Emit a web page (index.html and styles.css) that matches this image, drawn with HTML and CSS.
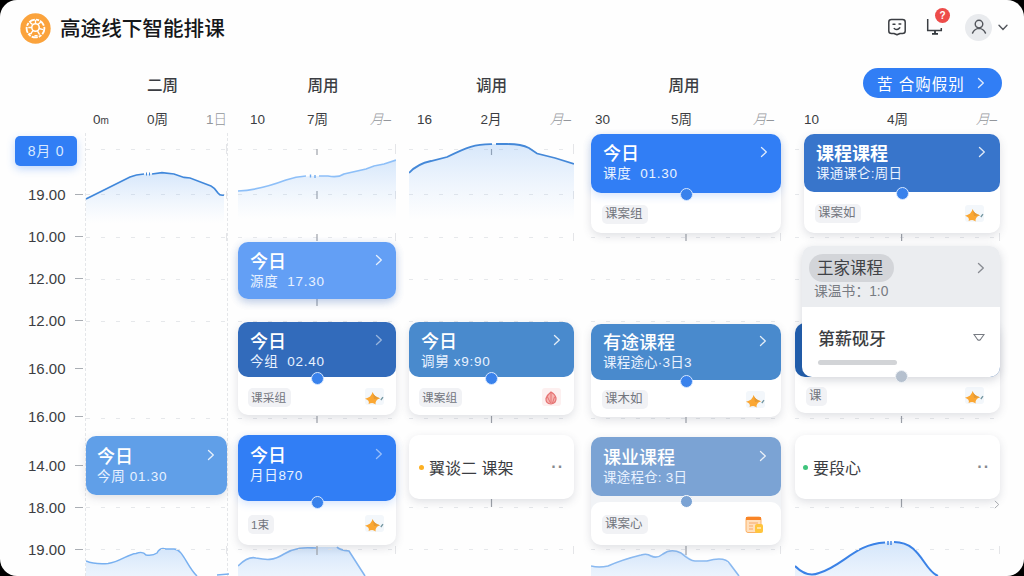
FILE: index.html
```html
<!DOCTYPE html>
<html lang="zh-CN">
<head>
    <meta charset="UTF-8">
    <meta name="viewport" content="width=device-width, initial-scale=1.0">
    <title>高途线下智能排课</title>
    <link rel="stylesheet" href="styles.css">
</head>
<body>
    <svg class="symbols" width="0" height="0">
        <symbol id="chevron" viewBox="0 0 8 12">
            <path d="M1.5 1.5 6.3 6 1.5 10.5" fill="none" stroke="currentColor" stroke-width="1.3" stroke-linecap="round" stroke-linejoin="round"/>
        </symbol>
        <symbol id="star" viewBox="0 0 20 18">
            <rect x="1" width="19" height="17" rx="3" fill="#f3f7fb"/>
            <path d="M8.6 4Q9.6 8.6 16 10.2 10.8 11.8 11.6 16.6 9 13.8 4.6 16 6 12.4 1 10.8 7.4 9.4 8.6 4Z" fill="#fba733"/>
            <path d="M8.6 4Q9.6 8.6 16 10.2L10 11Z" fill="#e59a35"/>
            <path d="M16.8 12 19 9.2" stroke="#7295a0" stroke-width="1.3"/>
        </symbol>
        <!-- horizontal rows behind every day column -->
        <symbol id="grid">
            <g stroke="#e6e8eb" stroke-width="1" stroke-dasharray="4 11">
                <line x1="0" x2="100%" y1="16.5" y2="16.5"/>
                <line x1="0" x2="100%" y1="61.5" y2="61.5"/>
                <line x1="0" x2="100%" y1="104.5" y2="104.5"/>
                <line x1="0" x2="100%" y1="146.5" y2="146.5"/>
                <line x1="0" x2="100%" y1="188.5" y2="188.5"/>
                <line x1="0" x2="100%" y1="285.5" y2="285.5"/>
                <line x1="0" x2="100%" y1="374.5" y2="374.5"/>
                <line x1="0" x2="100%" y1="416.5" y2="416.5"/>
            </g>
            <g stroke="#d9dbdf" stroke-width="1.4">
                <line x1="100%" x2="100%" y1="11" y2="21"/>
                <line x1="100%" x2="100%" y1="58" y2="66"/>
                <line x1="100%" x2="100%" y1="100" y2="108"/>
                <line x1="100%" x2="100%" y1="413" y2="421"/>
            </g>
        </symbol>
        <!-- centre ticks -->
        <symbol id="ticks">
            <g stroke="#9da1a8" stroke-width="1.2">
                <line x1="50%" x2="50%" y1="16" y2="22"/>
                <line x1="50%" x2="50%" y1="283" y2="290"/>
                <line x1="50%" x2="50%" y1="366" y2="374"/>
            </g>
        </symbol>
        <symbol id="ticks-more">
            <g stroke="#9da1a8" stroke-width="1.2">
                <line x1="50%" x2="50%" y1="58" y2="66"/>
                <line x1="50%" x2="50%" y1="101" y2="108"/>
                <line x1="50%" x2="50%" y1="413" y2="422"/>
            </g>
        </symbol>
        <linearGradient id="area" x1="0" y1="0" x2="0" y2="1">
            <stop offset="0" stop-color="#5b9ff0" stop-opacity=".24"/>
            <stop offset="1" stop-color="#8dbdf8" stop-opacity="0"/>
        </linearGradient>
        <linearGradient id="area-low" x1="0" y1="0" x2="0" y2="1">
            <stop offset="0" stop-color="#5b9ff0" stop-opacity=".26"/>
            <stop offset="1" stop-color="#8dbdf8" stop-opacity=".16"/>
        </linearGradient>
    </svg>

    <div class="app">
        <header class="header">
            <svg class="logo" viewBox="0 0 30 30">
                <circle cx="15" cy="15" r="14.7" fill="#fba33c"/>
                <circle cx="15" cy="15" r="8.6" fill="none" stroke="#fff" stroke-width="1.8" stroke-dasharray="6 1.2 3 1"/>
                <circle cx="15" cy="14" r="3.6" fill="none" stroke="#fff" stroke-width="1.5"/>
                <path d="M15 6.5v4M8 14h3.5M18.5 15l4 1M12.5 17l-2 3M17 17.5l2 3.5M17.5 11l3-2.5M12 11 9.5 9M8.5 20h3M14 22h3" fill="none" stroke="#fff" stroke-width="1.3"/>
            </svg>
            <h1 class="brand">高途线下智能排课</h1>
            <div class="tools">
                <svg class="tool-face" viewBox="0 0 20 20">
                    <path d="M4.5 2.5H15.5Q18.2 2.5 18.2 5V14Q18.2 16.5 15.5 16.5H13L10 17.8 7 16.5H4.5Q1.8 16.5 1.8 14V5Q1.8 2.5 4.5 2.5Z" fill="none" stroke="#3b3e43" stroke-width="1.5" stroke-linejoin="round"/>
                    <path d="M6 7.2h2M12 7h1.8M7.2 11.4Q10 14 12.8 10.8" fill="none" stroke="#3b3e43" stroke-width="1.4" stroke-linecap="round"/>
                </svg>
                <div class="notify">
                    <svg viewBox="0 0 20 20">
                        <path d="M2.7 2V13.4H16.3V11" fill="none" stroke="#3b3e43" stroke-width="1.5"/>
                        <path d="M7 16.8h6M10 14v3" stroke="#30363b" stroke-width="1.8"/>
                    </svg>
                    <span class="badge">?</span>
                </div>
                <div class="avatar">
                    <svg viewBox="0 0 20 20">
                        <circle cx="10" cy="6.8" r="4.2" fill="none" stroke="#54575d" stroke-width="1.6"/>
                        <path d="M2.8 16.8Q5 11.8 10 11.5 15 11.8 17.2 16.8" fill="none" stroke="#54575d" stroke-width="1.6" stroke-linecap="round"/>
                    </svg>
                </div>
                <svg class="caret" viewBox="0 0 10 7"><path d="M1 1.2 5 5.4 9 1.2" fill="none" stroke="#54575d" stroke-width="1.4" stroke-linecap="round"/></svg>
            </div>
        </header>

        <main class="board">
            <aside class="axis">
                <div class="now">8月 0</div>
                <div class="time">19.00</div>
                <div class="time">10.00</div>
                <div class="time">12.00</div>
                <div class="time">12.00</div>
                <div class="time tall">16.00</div>
                <div class="time tall">16.00</div>
                <div class="time tall">14.00</div>
                <div class="time">18.00</div>
                <div class="time">19.00</div>
            </aside>

            <section class="day day-1">
                <h2>二周</h2>
                <div class="scale"><span>0<small>m</small></span><span>0周</span><span class="muted">1日</span></div>
                <div class="lane">
                    <svg class="lines"><use href="#grid" width="100%" height="100%"/></svg>
                    <svg class="chart" viewBox="0 0 143 100">
                        <path d="M0 66 20 56 44 44Q52 41 62 41L80 40 98 44 125 53Q129 55 133 61Q137 64 138 62V90H0Z" fill="url(#area)"/>
                        <path d="M0 66 20 56 44 44Q50 41.5 58 41M66 41 76 39.6 88 41 98 44.4 104 45 125 53Q129 55 132 60Q134 63 138 62" fill="none" stroke="#4188db" stroke-width="1.6"/>
                        <path d="M60.5 39.5v3M63.5 39.5v3" stroke="#4188db"/>
                    </svg>
                    <article class="card">
                        <div class="head sky">
                            <div class="title">今日<svg class="chev"><use href="#chevron"/></svg></div>
                            <div class="sub">今周 01.30</div>
                        </div>
                    </article>
                    <svg class="chart-low" viewBox="0 0 143 36">
                        <path d="M0 21Q8 24.5 22 23.5C34 22 42 14 52 13.5H58Q64 17 71 13Q75 7 80 9H88C97 9 101 27 111 36H0Z" fill="url(#area-low)"/>
                        <path d="M0 21Q8 24.5 22 23.5C34 22 42 14 50 13.5Q57 11 60 15 67 16 71 13 74 7 80 9H88C97 9 101 27 111 36M131 35 143 34" fill="none" stroke="#78b0f0" stroke-width="1.5"/>
                    </svg>
                </div>
            </section>

            <section class="day day-2">
                <h2>周用</h2>
                <div class="scale"><span>10</span><span>7周</span><span class="muted slant">月–</span></div>
                <div class="lane">
                    <svg class="lines">
                        <use href="#grid" width="100%" height="100%"/>
                        <use href="#ticks" width="100%" height="100%"/>
                        <use href="#ticks-more" width="100%" height="100%"/>
                        <line x1="50%" x2="50%" y1="166" y2="173" stroke="#9da1a8" stroke-width="1.2"/>
                    </svg>
                    <svg class="chart" viewBox="0 0 158 100">
                        <path d="M0 58C22 57 40 50 48 47Q62 43 78 43H90L98 44 110 40 128 36 146 31 158 27V86H0Z" fill="url(#area)"/>
                        <path d="M0 58C22 57 40 50 48 47Q58 43.5 68 43M81 43H90Q100 45 106 41L128 36 136 33 146 31 158 27" fill="none" stroke="#8dbff8" stroke-width="1.7"/>
                        <path d="M72.5 41.5v3M77 42v3" stroke="#6eaaf0" stroke-width="1.4"/>
                    </svg>
                    <article class="card">
                        <div class="head light">
                            <div class="title">今日<svg class="chev"><use href="#chevron"/></svg></div>
                            <div class="sub">源度 &nbsp;17.30</div>
                        </div>
                    </article>
                    <article class="card split">
                        <div class="head navy">
                            <div class="title">今日<svg class="chev dim"><use href="#chevron"/></svg></div>
                            <div class="sub">今组 &nbsp;02.40</div>
                            <i class="dot"></i>
                        </div>
                        <div class="foot"><span class="tag">课采组</span><svg class="mark"><use href="#star"/></svg></div>
                    </article>
                    <article class="card split last">
                        <div class="head blue">
                            <div class="title">今日<svg class="chev dim"><use href="#chevron"/></svg></div>
                            <div class="sub">月日870</div>
                            <i class="dot"></i>
                        </div>
                        <div class="foot"><span class="tag">1束</span><svg class="mark"><use href="#star"/></svg></div>
                    </article>
                    <svg class="chart-low" viewBox="0 0 158 31">
                        <path d="M0 21Q10 11 18 13C28 15 35 16 46 9 60 1 70 2 100 2L111 6 127 31H0Z" fill="url(#area-low)"/>
                        <path d="M0 21Q10 11 18 13C28 15 35 16 46 9 60 1 70 3 78 3M99 2Q101 5 111 6L127 31" fill="none" stroke="#83b5f0" stroke-width="1.6"/>
                    </svg>
                </div>
            </section>

            <section class="day day-3">
                <h2>调用</h2>
                <div class="scale"><span>16</span><span>2月</span><span class="muted slant">月–</span></div>
                <div class="lane">
                    <svg class="lines"><use href="#grid" width="100%" height="100%"/><use href="#ticks" width="100%" height="100%"/></svg>
                    <svg class="chart" viewBox="0 0 165 100">
                        <path d="M0 40Q8 31 22 28L38 24C58 14 68 11 84 11H98Q112 11 120 15L130 21 165 31V88H0Z" fill="url(#area)"/>
                        <path d="M0 40Q8 31 22 28L38 24C58 14 66 11 83 11.2M87 11H98Q112 11 120 15L128 20.5 146 25 165 31" fill="none" stroke="#4488d8" stroke-width="1.8"/>
                    </svg>
                    <article class="card split">
                        <div class="head steel">
                            <div class="title">今日<svg class="chev"><use href="#chevron"/></svg></div>
                            <div class="sub">调舅 x9:90</div>
                            <i class="dot"></i>
                        </div>
                        <div class="foot">
                            <span class="tag">课案组</span>
                            <svg class="mark" viewBox="0 0 20 18">
                                <rect width="19" height="18" rx="3" fill="#fdf0f0"/>
                                <path d="M9 4Q13 6 14 10 14.5 15 9 16 3.5 15.5 4 10.5 5 7 9 4Z" fill="#f7b3b0" stroke="#e57373" stroke-width="1.2"/>
                                <path d="M9 5v10M5.5 9l3 6M12.5 9l-2 6" stroke="#e57373" fill="none"/>
                            </svg>
                        </div>
                    </article>
                    <article class="note"><i class="bullet amber"></i><span>翼谈二 课架</span><b>··</b></article>
                </div>
            </section>

            <section class="day day-4">
                <h2>周用</h2>
                <div class="scale"><span>30</span><span>5周</span><span class="muted slant">月–</span></div>
                <div class="lane">
                    <svg class="lines">
                        <use href="#grid" width="100%" height="100%"/>
                        <use href="#ticks" width="100%" height="100%"/>
                        <use href="#ticks-more" width="100%" height="100%"/>
                    </svg>
                    <article class="card split">
                        <div class="head blue">
                            <div class="title">今日<svg class="chev"><use href="#chevron"/></svg></div>
                            <div class="sub">课度 &nbsp;01.30</div>
                            <i class="dot"></i>
                        </div>
                        <div class="foot"><span class="tag">课案组</span></div>
                    </article>
                    <article class="card split">
                        <div class="head steel">
                            <div class="title">有途课程<svg class="chev"><use href="#chevron"/></svg></div>
                            <div class="sub tight">课程途心·3日3</div>
                            <i class="dot"></i>
                        </div>
                        <div class="foot"><span class="tag">课木如</span><svg class="mark"><use href="#star"/></svg></div>
                    </article>
                    <article class="card split last">
                        <div class="head slate">
                            <div class="title">课业课程<svg class="chev"><use href="#chevron"/></svg></div>
                            <div class="sub tight">课途程仓: 3日</div>
                            <i class="dot pale"></i>
                        </div>
                        <div class="foot">
                            <span class="tag">课案心</span>
                            <svg class="mark" viewBox="0 0 20 18">
                                <rect x="1" y="1" width="15" height="15.5" rx="2" fill="#ffe0bd" stroke="#fbb066"/>
                                <path d="M1 1H16V4H1Z" fill="#f98426"/>
                                <path d="M4 7h9M4 10h4M4 13h4" stroke="#f7a868"/>
                                <rect x="10" y="8" width="8" height="9" rx="2" fill="#ffc53d"/>
                                <path d="M12 12h4" stroke="#fff"/>
                            </svg>
                        </div>
                    </article>
                    <svg class="chart-low" viewBox="0 0 190 31">
                        <path d="M0 21H15C28 18 35 12 50 10H60L68 12Q75 4 85 6L94 9Q103 18 110 16L128 14Q137 15 148 31H0Z" fill="url(#area-low)"/>
                        <path d="M0 21Q8 23 17 21C28 16 38 13 50 10Q56 8 60 11 66 14 72 9 80 3 90 8 99 16 104 16H116Q134 11 139 19L148 31" fill="none" stroke="#8ab9f0" stroke-width="1.6"/>
                    </svg>
                </div>
            </section>

            <section class="day day-5">
                <button class="action">苦 合购假别<svg class="chev"><use href="#chevron"/></svg></button>
                <div class="scale"><span>10</span><span>4周</span><span class="muted slant">月–</span></div>
                <div class="lane">
                    <svg class="lines">
                        <use href="#grid" width="100%" height="100%"/>
                        <use href="#ticks" x="4" width="100%" height="100%"/>
                        <line x1="52%" x2="52%" y1="101" y2="108" stroke="#9da1a8" stroke-width="1.2"/>
                    </svg>
                    <article class="card split narrow">
                        <div class="head royal">
                            <div class="title bold">课程课程<svg class="chev"><use href="#chevron"/></svg></div>
                            <div class="sub tight">课通课仑:周日</div>
                            <i class="dot"></i>
                        </div>
                        <div class="foot"><span class="tag">课案如</span><svg class="mark"><use href="#star"/></svg></div>
                    </article>
                    <article class="card split">
                        <div class="head deep"></div>
                        <div class="foot"><span class="tag">课</span><svg class="mark"><use href="#star"/></svg></div>
                    </article>
                    <article class="note"><i class="bullet green"></i><span>要段心</span><b>··</b></article>
                    <svg class="more"><use href="#chevron"/></svg>
                    <svg class="chart-low" viewBox="0 0 205 36">
                        <path d="M0 26Q12 38 24 33C48 26 60 4 90 2.5H104C128 4 130 30 143 36H0Z" fill="url(#area-low)"/>
                        <path d="M0 26Q12 38 24 33C48 26 60 4 90 2.5M99 2C126 2 128 30 143 36" fill="none" stroke="#3b82e6" stroke-width="2"/>
                        <path d="M93 1v4M96 1v4" stroke="#3b82e6" stroke-width="1.4"/>
                    </svg>

                    <div class="popup">
                        <div class="popup-head">
                            <div class="pill">王家课程</div>
                            <svg class="chev"><use href="#chevron"/></svg>
                            <div class="popup-sub">课温书：1:0</div>
                        </div>
                        <div class="popup-body">
                            <div class="popup-row">
                                <span>第薪砚牙</span>
                                <svg viewBox="0 0 12 9"><path d="M1 1.5H11L7.5 6.5Q6 8 4.5 6.5Z" fill="none" stroke="#777b82" stroke-width="1.1"/></svg>
                            </div>
                            <div class="bar"></div>
                        </div>
                        <i class="dot gray"></i>
                    </div>
                </div>
            </section>
        </main>
    </div>
</body>
</html>
```
FILE: styles.css
```css
:root {
    --blue: #317ef5;
    --text: #3b3d42;
    --shadow: 0 3px 9px rgba(70, 80, 100, 0.17);
}

* {
    box-sizing: border-box;
}

body {
    margin: 0;
    background: #000;
    color: var(--text);
    font-family: "Liberation Sans", "Noto Sans CJK SC", sans-serif;
}

.symbols {
    position: absolute;
}

.app {
    width: 1024px;
    height: 576px;
    overflow: hidden;
    background: #fefefe;
    border-radius: 17px;
}

.header {
    display: flex;
    align-items: center;
    height: 56px;
    padding: 0 16px 0 20px;
}

.logo {
    width: 31px;
    height: 31px;
}

.brand {
    margin: 0 0 2px 9px;
    color: #15171a;
    font-family: "Noto Sans CJK SC", sans-serif;
    font-size: 20.6px;
    font-weight: 500;
    line-height: 30px;
}

.tools {
    display: flex;
    align-items: center;
    margin-left: auto;
    padding-bottom: 2px;
}

.tool-face {
    width: 20px;
    height: 20px;
}

.notify {
    position: relative;
    width: 20px;
    height: 20px;
    margin-left: 18px;
}

.badge {
    position: absolute;
    top: -9px;
    left: 10px;
    width: 15px;
    height: 15px;
    border-radius: 50%;
    background: #ed4c4a;
    color: #fff;
    font-size: 10px;
    font-weight: bold;
    line-height: 15px;
    text-align: center;
}

.avatar {
    display: flex;
    align-items: center;
    justify-content: center;
    width: 27px;
    height: 27px;
    margin-left: 20px;
    border-radius: 50%;
    background: #e9ebee;
}

.avatar svg {
    width: 18px;
    height: 18px;
}

.caret {
    width: 10px;
    height: 7px;
    margin-left: 6px;
}

.board {
    display: flex;
    height: 520px;
}

/* time axis */
.axis {
    width: 85px;
    padding-top: 80px;
    flex-shrink: 0;
}

.now {
    width: 62px;
    height: 30px;
    margin: 0 0 18px 15px;
    border-radius: 5px;
    background: var(--blue);
    box-shadow: 0 3px 8px rgba(49, 126, 245, 0.3);
    color: #d9e9ff;
    font-size: 14px;
    letter-spacing: 0.8px;
    line-height: 31px;
    text-align: center;
}

.time {
    display: flex;
    align-items: center;
    justify-content: space-between;
    height: 20px;
    margin-top: 22px;
    padding: 0 2px 0 28px;
    font-size: 15px;
}

.now + .time {
    margin-top: 0;
}

.time.tall {
    margin-top: 28.4px;
}

.time::after {
    content: "";
    width: 8px;
    height: 1px;
    background: #aaaeb4;
}

/* day columns */
.day {
    display: flex;
    flex-direction: column;
    flex-shrink: 0;
}

.day-1 {
    width: 143px;
    margin-right: 10px;
}

.day-2 {
    width: 158px;
    margin-right: 13px;
}

.day-3 {
    width: 165px;
    margin-right: 17px;
}

.day-4 {
    width: 190px;
    margin-right: 14px;
}

.day-5 {
    width: 205px;
}

.day h2 {
    height: 54px;
    margin: 0;
    padding: 18px 0 0 12px;
    font-size: 15.5px;
    font-weight: 500;
    line-height: 24px;
    text-align: center;
}

.day-3 h2 {
    padding-left: 0;
}

.day-4 h2 {
    padding-left: 0;
    padding-right: 4px;
}

.scale {
    display: flex;
    justify-content: space-between;
    height: 23px;
    padding: 0 3px 0 8px;
    font-size: 13.5px;
    line-height: 19px;
}

.scale small {
    font-size: 10px;
}

.scale .muted {
    color: #93969b;
    font-weight: 300;
}

.scale .slant {
    font-style: italic;
}

.day-1 .scale {
    padding: 0 1px 0 8px;
}

.day-2 .scale {
    padding: 0 5px 0 12px;
}

.day-4 .scale {
    padding: 0 7px 0 4px;
}

.day-5 .scale {
    padding: 0 3px 0 9px;
}

.lane {
    position: relative;
    display: flex;
    flex-direction: column;
    height: 443px;
}

.lines {
    position: absolute;
    inset: 0;
    width: 100%;
    height: 100%;
    overflow: visible;
}

.day-1 .lane {
    border-left: 1px dashed #e4e6e9;
    border-right: 1px dashed #e4e6e9;
}

.chart {
    position: relative;
    height: 100px;
    flex-shrink: 0;
}

.chart-low {
    flex-shrink: 0;
    margin-top: auto;
}

.day-1 .chart,
.day-1 .chart-low {
    width: 143px;
}

/* lesson cards */
.card {
    position: relative;
    flex-shrink: 0;
    border-radius: 10px;
    background: #fff;
    box-shadow: var(--shadow);
}

.head {
    position: relative;
    height: 57px;
    padding: 5px 13px 0 12px;
    border-radius: 10px;
    color: #fff;
}

.title {
    display: flex;
    align-items: center;
    justify-content: space-between;
    height: 25px;
    font-size: 18px;
    font-weight: 500;
}

.title.bold {
    font-weight: 700;
}

.sub {
    margin-top: 1px;
    color: #e9f2ff;
    font-size: 13.5px;
    letter-spacing: 0.7px;
    line-height: 18px;
    white-space: nowrap;
}

.sub.tight {
    letter-spacing: 0.2px;
}

.chev {
    width: 8px;
    height: 12px;
    opacity: 0.85;
}

.chev.dim {
    opacity: 0.5;
}

.sky { background: #609fe8; }
.light { background: #639ff5; }
.navy { background: #326bbb; }
.blue { background: var(--blue); }
.steel { background: #498acd; }
.royal { background: #3875cb; }
.slate { background: #7ba3d4; }
.deep { background: #205eae; }

.light,
.card > .blue {
    box-shadow: 0 3px 9px rgba(49, 126, 245, 0.2);
}

.dot {
    position: absolute;
    bottom: -8px;
    left: 50%;
    width: 13px;
    height: 13px;
    margin-left: -6.5px;
    border: 1.5px solid #d6e7ff;
    border-radius: 50%;
    background: #3982ec;
}

.dot.pale {
    bottom: -12px;
    background: #7ba3d4;
    border-color: #fff;
}

.dot.gray {
    bottom: -6px;
    background: #b5c0ce;
    border-color: #edf0f4;
}

.foot {
    display: flex;
    align-items: center;
    justify-content: space-between;
    height: 38px;
    padding: 2px 12px 0 10px;
}

.tag {
    padding: 0 5px 0 3px;
    border-radius: 5px;
    background: #f1f2f5;
    color: #72757d;
    font-size: 11.7px;
    line-height: 19px;
}

.mark {
    width: 20px;
    height: 18px;
}

.note {
    position: relative;
    display: flex;
    align-items: center;
    flex-shrink: 0;
    height: 64px;
    margin-top: 20px;
    padding: 0 10px;
    border-radius: 10px;
    background: #fff;
    box-shadow: var(--shadow);
    font-size: 16px;
}

.note b {
    margin-left: auto;
    color: #85898f;
    letter-spacing: 1px;
}

.bullet {
    width: 5px;
    height: 5px;
    margin-right: 5px;
    border-radius: 50%;
}

.amber { background: #fdb022; }
.green { background: #3fc47c; }

/* vertical rhythm of each lane */
.day-1 .card {
    margin-top: 203px;
}

.day-1 .head {
    height: 59px;
    padding: 6px 12px 0 11px;
}

.day-2 .card {
    margin-top: 9px;
}

.day-2 .card.split {
    margin-top: 23px;
}

.day-2 .split .head {
    height: 55px;
}

.day-2 .card.last {
    margin-top: 20px;
}

.day-2 .last .head {
    height: 66px;
    padding-top: 6px;
}

.day-2 .last .foot {
    height: 44px;
}

.day-3 .card {
    margin-top: 89px;
}

.day-3 .head {
    height: 55px;
}

.day-4 .card {
    margin-top: 1px;
}

.day-4 .head {
    height: 59px;
}

.day-4 .foot {
    height: 40px;
}

.day-4 .card + .card {
    margin-top: 91px;
}

.day-4 .card + .card .head {
    height: 56px;
    padding: 4px 14px 0 12px;
}

.day-4 .card + .card .foot {
    height: 37px;
}

.day-4 .card.last {
    margin-top: 20px;
    background: #f1f3f6;
}

.day-4 .card.last .head {
    height: 59px;
    padding-top: 6px;
}

.day-4 .card.last .foot {
    height: 43px;
    margin-top: 6px;
    border-radius: 10px;
    background: #fff;
}

.day-4 .tag,
.day-5 .tag {
    font-size: 12.5px;
}

.day-4 .foot,
.day-5 .foot {
    padding-right: 16px;
    padding-left: 11px;
}

.day-5 .card {
    margin-top: 90px;
}

.day-5 .card .head {
    height: 54px;
}

.day-5 .card .foot {
    height: 36px;
}

.day-5 .card.narrow {
    margin: 1px 0 0 9px;
}

.day-5 .narrow .head {
    height: 58px;
    padding-right: 14px;
}

.day-5 .narrow .foot {
    height: 41px;
}

.day-5 .note {
    margin-top: 22px;
    padding-left: 8px;
}

.action {
    display: flex;
    align-items: center;
    justify-content: space-between;
    align-self: flex-end;
    width: 139px;
    height: 30px;
    margin: 12px -2px 12px 0;
    padding: 0 17px 0 14px;
    border: 0;
    border-radius: 15px;
    background: var(--blue);
    color: #fff;
    font-family: inherit;
    font-size: 15.5px;
    letter-spacing: 1px;
}

.more {
    position: relative;
    align-self: flex-end;
    width: 6px;
    height: 9px;
    margin-top: 1px;
    color: #a5a8ad;
}

/* popup over the last column */
.popup {
    position: absolute;
    top: 113px;
    left: 7px;
    width: 198px;
    height: 131px;
    border-radius: 10px;
    background: #fff;
    box-shadow: 0 3px 10px rgba(60, 70, 90, 0.22);
}

.popup-head {
    display: grid;
    grid-template-columns: 1fr auto;
    align-items: center;
    align-content: start;
    row-gap: 1px;
    height: 61px;
    padding: 8px 15px 0 7px;
    border-radius: 10px 10px 0 0;
    background: #ebedf0;
    color: #777b82;
}

.pill {
    justify-self: start;
    height: 28px;
    padding: 0 11px 0 8px;
    border-radius: 14px;
    background: #d3d5d9;
    color: #3f4146;
    font-size: 16.5px;
    line-height: 28px;
}

.popup-sub {
    padding-left: 5px;
    font-size: 13.8px;
    line-height: 18px;
}

.popup-body {
    padding: 17px 15px 0 16px;
}

.popup-row {
    display: flex;
    align-items: center;
    justify-content: space-between;
    height: 26px;
    font-size: 17px;
    font-weight: 500;
}

.popup-row svg {
    width: 12px;
    height: 9px;
}

.bar {
    width: 79px;
    height: 5px;
    margin-top: 10px;
    border-radius: 3px;
    background: #d2d4d7;
}
```
